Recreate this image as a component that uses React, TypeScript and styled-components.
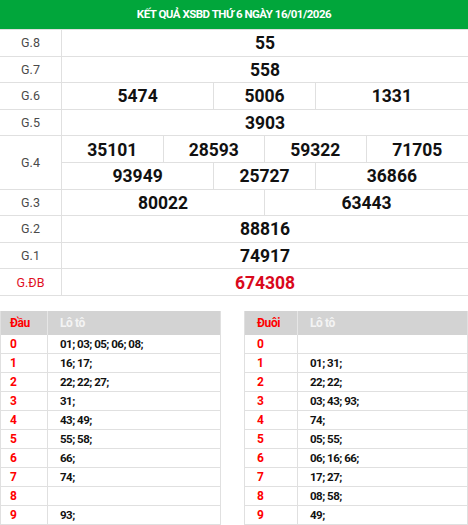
import React from "react";
import styled, { createGlobalStyle } from "styled-components";

const Global = createGlobalStyle`
  html, body { margin: 0; padding: 0; background: #fff; }
  body { font-family: Roboto, "Liberation Sans", Arial, sans-serif; width: 468px; overflow: hidden; }
`;

const Page = styled.div`
  width: 468px;
`;

const Title = styled.div`
  height: 30px;
  background: #01a63b;
  color: #fff;
  font-weight: 700;
  font-size: 11.5px;
  letter-spacing: -0.5px;
  display: flex;
  align-items: center;
  justify-content: center;
  box-sizing: border-box;
  padding-bottom: 1px;
  border-bottom: 1px solid #e0e0e0;
`;

const Results = styled.div`
  display: grid;
  grid-template-columns: 62px repeat(8, 1fr);
  grid-auto-rows: 26.6px;
`;

const Label = styled.div<{ $span?: number; $special?: boolean }>`
  grid-column: 1;
  grid-row: span ${(p) => p.$span || 1};
  display: flex;
  align-items: center;
  justify-content: center;
  font-size: 12.5px;
  color: ${(p) => (p.$special ? "#e0101f" : "#4a4a4a")};
  border-right: 1px solid #e0e0e0;
  border-bottom: 1px solid #e0e0e0;
  box-sizing: border-box;
`;

const Num = styled.div<{ $span: number; $last?: boolean; $special?: boolean }>`
  grid-column: span ${(p) => p.$span};
  display: flex;
  align-items: center;
  justify-content: center;
  font-weight: 700;
  font-size: 17.5px;
  color: ${(p) => (p.$special ? "#d9091c" : "#111")};
  border-bottom: 1px solid #e0e0e0;
  border-right: ${(p) => (p.$last ? "none" : "1px solid #e0e0e0")};
  box-sizing: border-box;
  padding-top: 1px;
`;

const Tables = styled.div`
  display: grid;
  grid-template-columns: 221px 1fr;
  column-gap: 23px;
  margin-top: 15px;
`;

const LotoTable = styled.div<{ $first: number }>`
  display: grid;
  grid-template-columns: ${(p) => p.$first}px 1fr;
  grid-template-rows: 24px;
  grid-auto-rows: 19px;
  border-left: 1px solid #e0e0e0;
  border-right: 1px solid #e0e0e0;
`;

const Head = styled.div<{ $red?: boolean; $pad: number }>`
  background: #d3d3d3;
  color: ${(p) => (p.$red ? "#ff0000" : "#f4f4f4")};
  font-weight: 700;
  font-size: 12px;
  letter-spacing: -0.4px;
  display: flex;
  align-items: center;
  padding-left: ${(p) => p.$pad}px;
  border-right: ${(p) => (p.$red ? "1px solid #e6e6e6" : "none")};
`;

const Key = styled.div<{ $pad: number }>`
  color: #ff0000;
  font-weight: 700;
  font-size: 12px;
  display: flex;
  align-items: center;
  padding-left: ${(p) => p.$pad}px;
  border-right: 1px solid #e0e0e0;
  border-bottom: 1px solid #e0e0e0;
`;

const Vals = styled.div`
  color: #111;
  font-weight: 700;
  font-size: 11.5px;
  letter-spacing: -0.5px;
  display: flex;
  align-items: center;
  padding-left: 12px;
  border-bottom: 1px solid #e0e0e0;
`;

type Prize = { label: string; rows: string[][]; special?: boolean };

const prizes: Prize[] = [
  { label: "G.8", rows: [["55"]] },
  { label: "G.7", rows: [["558"]] },
  { label: "G.6", rows: [["5474", "5006", "1331"]] },
  { label: "G.5", rows: [["3903"]] },
  { label: "G.4", rows: [["35101", "28593", "59322", "71705"], ["93949", "25727", "36866"]] },
  { label: "G.3", rows: [["80022", "63443"]] },
  { label: "G.2", rows: [["88816"]] },
  { label: "G.1", rows: [["74917"]] },
  { label: "G.ĐB", rows: [["674308"]], special: true },
];

const spans = (n: number) => (n === 1 ? [8] : n === 2 ? [4, 4] : n === 3 ? [3, 2, 3] : [2, 2, 2, 2]);

const dau = ["01; 03; 05; 06; 08;", "16; 17;", "22; 22; 27;", "31;", "43; 49;", "55; 58;", "66;", "74;", "", "93;"];
const duoi = ["", "01; 31;", "22; 22;", "03; 43; 93;", "74;", "05; 55;", "06; 16; 66;", "17; 27;", "08; 58;", "49;"];

function Loto({ title, data, first, pad }: { title: string; data: string[]; first: number; pad: number }) {
  return (
    <LotoTable $first={first}>
      <Head $red $pad={pad}>{title}</Head>
      <Head $pad={12}>Lô tô</Head>
      {data.map((v, i) => (
        <React.Fragment key={i}>
          <Key $pad={pad}>{i}</Key>
          <Vals>{v}</Vals>
        </React.Fragment>
      ))}
    </LotoTable>
  );
}

export default function App() {
  return (
    <Page>
      <Global />
      <Title>KẾT QUẢ XSBD THỨ 6 NGÀY 16/01/2026</Title>
      <Results>
        {prizes.map((p) => (
          <React.Fragment key={p.label}>
            <Label $span={p.rows.length} $special={p.special}>{p.label}</Label>
            {p.rows.map((r) =>
              r.map((n, i) => (
                <Num key={n} $span={spans(r.length)[i]} $last={i === r.length - 1} $special={p.special}>
                  {n}
                </Num>
              ))
            )}
          </React.Fragment>
        ))}
      </Results>
      <Tables>
        <Loto title="Đầu" data={dau} first={47} pad={9} />
        <Loto title="Đuôi" data={duoi} first={53} pad={12} />
      </Tables>
    </Page>
  );
}
